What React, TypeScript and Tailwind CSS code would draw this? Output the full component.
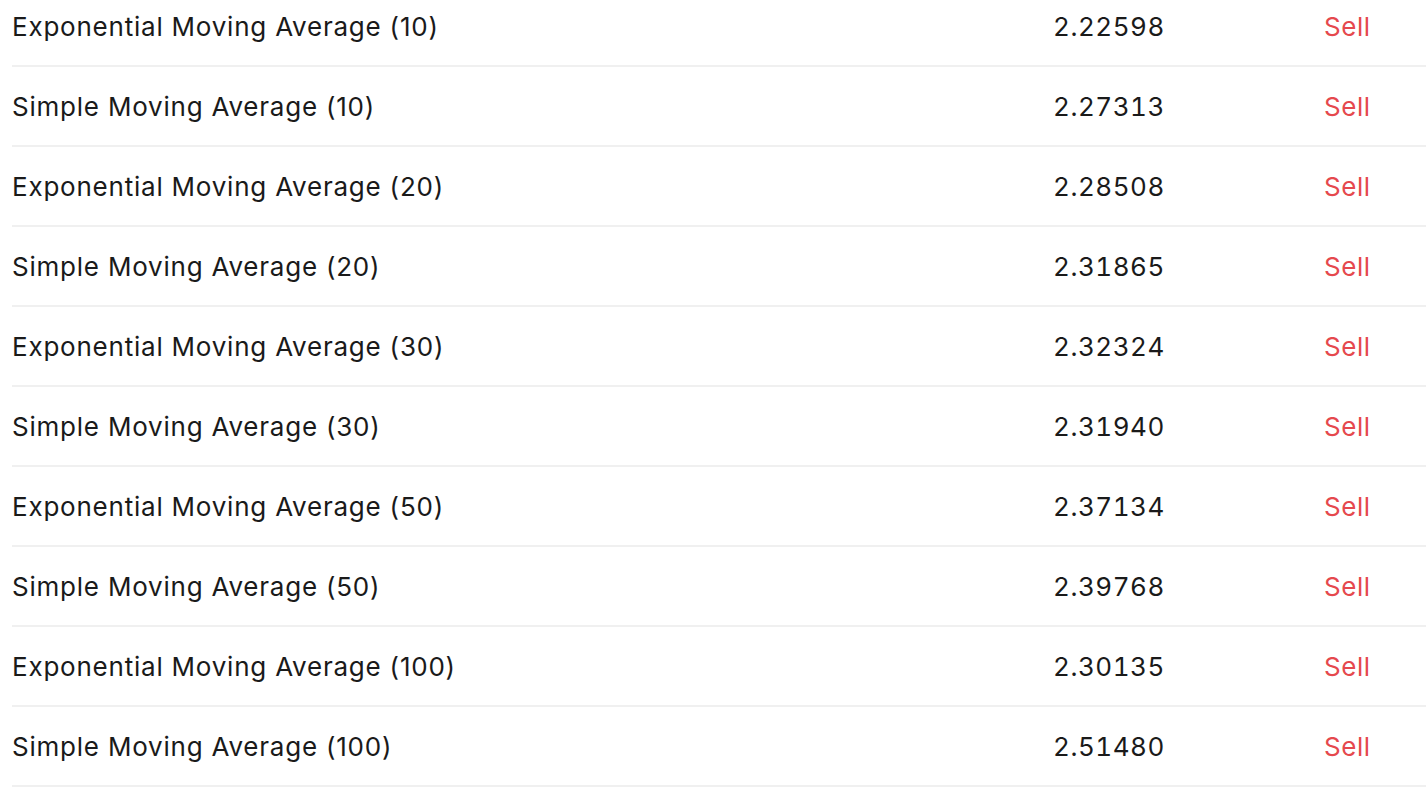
const rows: [string, string][] = [
  ["Exponential Moving Average (10)", "2.22598"],
  ["Simple Moving Average (10)", "2.27313"],
  ["Exponential Moving Average (20)", "2.28508"],
  ["Simple Moving Average (20)", "2.31865"],
  ["Exponential Moving Average (30)", "2.32324"],
  ["Simple Moving Average (30)", "2.31940"],
  ["Exponential Moving Average (50)", "2.37134"],
  ["Simple Moving Average (50)", "2.39768"],
  ["Exponential Moving Average (100)", "2.30135"],
  ["Simple Moving Average (100)", "2.51480"],
];

export default function App() {
  return (
    <div className="h-[788px] overflow-hidden bg-white pl-3 font-['Inter',sans-serif] text-[26px] text-[#1a1a1a]">
      <div className="-mt-[13px]">
        {rows.map(([name, value]) => (
          <div
            key={name}
            className="grid h-20 grid-cols-[1041px_271px_1fr] items-center border-b-2 border-[#f0f0f0]"
          >
            <span className="tracking-[0.03em]">{name}</span>
            <span className="tabular-nums tracking-[0.02em]">{value}</span>
            <span className="tracking-[0.02em] text-[#e5484d]">Sell</span>
          </div>
        ))}
      </div>
    </div>
  );
}
